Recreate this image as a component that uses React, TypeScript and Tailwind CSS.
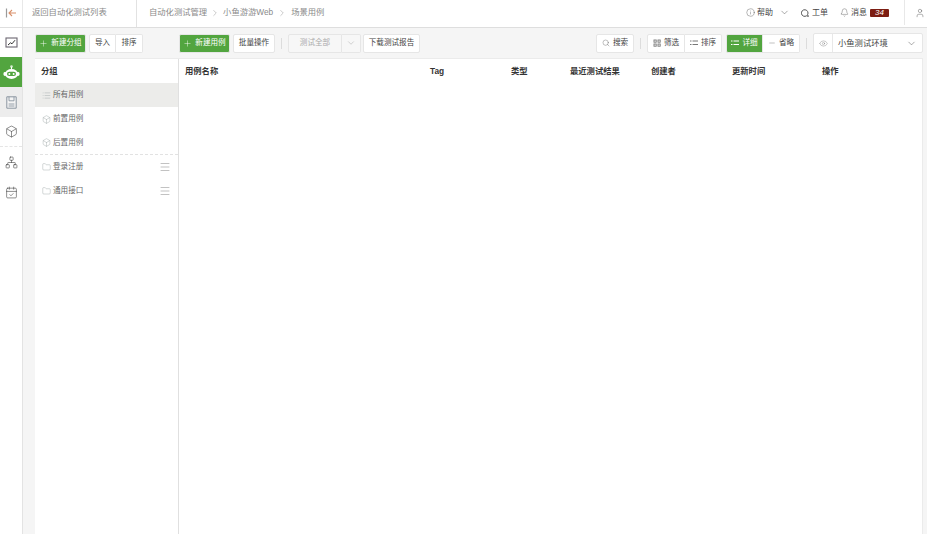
import React from "react";
import { Search, ChevronDown, ChevronRight, Plus, Eye, Info, User, Bell, Menu, List, Folder, Box, Network, CalendarCheck, Minus } from "lucide-react";

const Btn = ({ children, className = "" }: { children: React.ReactNode; className?: string }) => (
  <div className={`flex h-[19px] items-center justify-center border-[#e6e6e6] bg-white text-[7.6px] text-[#444] ${className}`}>{children}</div>
);

const Sep = () => <div className="h-[11px] w-px bg-[#dcdcdc]" />;

const Row = ({ icon, label, active, menu, dashed }: { icon: React.ReactNode; label: string; active?: boolean; menu?: boolean; dashed?: boolean }) => (
  <div className={`flex h-6 items-center pl-[7px] pr-[7px] text-[7.6px] text-[#666] ${active ? "bg-[#ececea]" : ""} ${dashed ? "border-b border-dashed border-[#e2e2e2]" : ""}`}>
    <span className="mr-[2px] flex w-[9px] justify-center text-[#8f9a9a]">{icon}</span>
    <span className="flex-1">{label}</span>
    {menu && <Menu size={12} strokeWidth={0.9} className="text-[#777]" />}
  </div>
);

const Rail = ({ children, active, muted, dashed, h = "h-[30px]" }: { children: React.ReactNode; active?: boolean; muted?: boolean; dashed?: boolean; h?: string }) => (
  <div className={`flex ${h} items-center justify-center ${active ? "bg-[#52a53f] text-white" : muted ? "bg-[#ededed] text-[#666]" : "text-[#444]"} ${dashed ? "border-b border-dashed border-[#e5e5e5]" : ""}`}>{children}</div>
);

const BackIcon = () => (
  <svg width="13" height="12" viewBox="0 0 13 12" fill="none">
    <path d="M2.5 1.5v9" stroke="#9a9a9a" strokeWidth="1.2" />
    <path d="M12 6H5M8 3 5 6l3 3" stroke="#d9906a" strokeWidth="1.1" />
  </svg>
);

const ChartIcon = () => (
  <svg width="13" height="11" viewBox="0 0 13 11" fill="none">
    <rect x="1" y="1" width="11" height="9" fill="#fff" stroke="#6b6570" strokeWidth="1.1" />
    <path d="M3 8l2.5-2.2 1.5 1L10 3.2" stroke="#333" strokeWidth="1" />
  </svg>
);

const RobotIcon = () => (
  <svg width="17" height="15" viewBox="0 0 17 15">
    <circle cx="8.5" cy="1.6" r="1.3" fill="#d8eed2" />
    <path d="M8.5 2v2" stroke="#fff" strokeWidth="1" />
    <rect x="0.5" y="7" width="3" height="4" rx="1.4" fill="#fff" />
    <rect x="13.5" y="7" width="3" height="4" rx="1.4" fill="#fff" />
    <ellipse cx="8.5" cy="9" rx="6.4" ry="5" fill="#fff" />
    <rect x="4" y="6.8" width="9" height="4.2" rx="2.1" fill="#52a53f" />
    <circle cx="6.4" cy="8.9" r="1" fill="#fff" />
    <circle cx="10.6" cy="8.9" r="1" fill="#fff" />
  </svg>
);

const DocIcon = () => (
  <svg width="11" height="13" viewBox="0 0 11 13" fill="none">
    <path d="M.8.8h9.4v11.4H.8z" fill="#f4f4f4" stroke="#8a95a0" strokeWidth="1" />
    <path d="M3 .8v4h5V.8M2.6 8h5.8M2.6 10h5.8" stroke="#8a95a0" strokeWidth=".9" />
  </svg>
);

const FilterDots = () => (
  <svg width="8" height="8" viewBox="0 0 8 8" fill="none" stroke="#777" strokeWidth=".9">
    <rect x="1" y="1" width="2.2" height="2.2" />
    <rect x="5" y="1" width="2.2" height="2.2" />
    <rect x="1" y="5" width="2.2" height="2.2" />
    <rect x="5" y="5" width="2.2" height="2.2" />
  </svg>
);

const Lines = ({ color }: { color: string }) => (
  <svg width="8" height="6" viewBox="0 0 8 6" fill="none" stroke={color} strokeWidth="1">
    <path d="M0 1h1.500M0 4.500h1.500M2.500 1H8M2.500 4.500H8" />
  </svg>
);

export default function App() {
  return (
    <div className="flex h-[534px] w-[927px] flex-col overflow-hidden bg-[#f5f5f5] text-[8.3px] text-[#444]" style={{ fontFamily: '"Liberation Sans", "Noto Sans CJK SC", sans-serif' }}>
      <header className="flex h-7 shrink-0 items-center border-b border-[#dedede] bg-white text-[#8a8a8a]">
        <div className="flex h-full w-[23px] items-center justify-center border-r border-[#e8e8e8] pb-[2px] pr-[2px]">
          <BackIcon />
        </div>
        <div className="flex h-full w-[114px] items-center border-r border-[#e2e2e2] pb-[2px] pl-[9px]">返回自动化测试列表</div>
        <div className="flex items-center pb-[2px] pl-3">
          <span>自动化测试管理</span>
          <ChevronRight size={10} strokeWidth={1.1} className="ml-[3px] mr-[3px]" />
          <span>小鱼游游Web</span>
          <ChevronRight size={10} strokeWidth={1.1} className="ml-[4px] mr-[4px]" />
          <span>场景用例</span>
        </div>
        <div className="ml-auto flex h-full items-center pb-[2px] text-[8px] text-[#444]">
          <Info size={9} strokeWidth={1} className="mr-[2px]" />
          <span>帮助</span>
          <ChevronDown size={11} strokeWidth={1} className="ml-[6px] mr-[11px]" />
          <svg width="8" height="8" viewBox="0 0 8 8" fill="none" stroke="#444" strokeWidth=".9" className="mr-[3px]"><path d="M5.500 6.800A3.300 3.300 0 1 1 6.600 5.600L7.400 7.400z" /></svg>
          <span>工单</span>
          <Bell size={9} strokeWidth={1} className="ml-[12px] mr-[2px]" />
          <span>消息</span>
          <span className="ml-[3px] flex h-[8px] w-[19px] items-center justify-center rounded-[1px] bg-[#7c1d12] text-[8px] italic text-white">34</span>
          <div className="ml-[15px] flex h-full w-[23px] items-center justify-end border-l border-[#e8e8e8] pr-[2px]">
            <User size={10} strokeWidth={1} />
          </div>
        </div>
      </header>
      <div className="flex min-h-0 flex-1">
        <nav className="w-[23px] shrink-0 border-r border-[#e3e3e3] bg-white">
          <Rail h="h-[29px]"><ChartIcon /></Rail>
          <Rail active><RobotIcon /></Rail>
          <Rail muted><DocIcon /></Rail>
          <Rail dashed><Box size={13} strokeWidth={1.1} /></Rail>
          <Rail><Network size={13} strokeWidth={1.1} /></Rail>
          <Rail><CalendarCheck size={13} strokeWidth={1.1} /></Rail>
        </nav>
        <main className="flex min-w-0 flex-1 flex-col pl-3 pr-1">
          <div className="flex h-[30px] shrink-0 items-center">
            <Btn className="w-[51px] rounded-[2px] border border-[#52a53f] !bg-[#52a53f] !text-white"><Plus size={9} strokeWidth={1.2} className="mr-[3px]" />新建分组</Btn>
            <Btn className="ml-[3px] w-[27px] rounded-l-[2px] border">导入</Btn>
            <Btn className="w-[27px] rounded-r-[2px] border border-l-0">排序</Btn>
            <Btn className="ml-[36px] w-[51px] rounded-[2px] border border-[#52a53f] !bg-[#52a53f] !text-white"><Plus size={9} strokeWidth={1.2} className="mr-[3px]" />新建用例</Btn>
            <Btn className="ml-[3px] w-[42px] rounded-[2px] border">批量操作</Btn>
            <div className="mx-[6px]"><Sep /></div>
            <Btn className="w-[54px] rounded-l-[2px] border !bg-[#f7f7f7] !text-[#aaa]">测试全部</Btn>
            <Btn className="w-[19px] rounded-r-[2px] border border-l-0 !bg-[#f7f7f7] !text-[#999]"><ChevronDown size={10} strokeWidth={1} /></Btn>
            <Btn className="ml-[2px] w-[57px] rounded-[2px] border">下载测试报告</Btn>
            <Btn className="ml-auto w-[38px] rounded-[2px] border"><Search size={8} strokeWidth={1} className="mr-[3px]" />搜索</Btn>
            <div className="mx-[6px]"><Sep /></div>
            <Btn className="w-[38px] rounded-l-[2px] border"><span className="mr-[3px]"><FilterDots /></span>筛选</Btn>
            <Btn className="w-[37px] rounded-r-[2px] border border-l-0"><span className="mr-[3px]"><Lines color="#777" /></span>排序</Btn>
            <div className="w-[4px]" />
            <Btn className="w-[37px] rounded-l-[2px] border border-[#52a53f] !bg-[#52a53f] !text-white"><span className="mr-[3px]"><Lines color="#fff" /></span>详细</Btn>
            <Btn className="w-[37px] rounded-r-[2px] border border-l-0"><Minus size={8} strokeWidth={1} className="mr-[3px]" />省略</Btn>
            <div className="mx-[6px]"><Sep /></div>
            <div className="flex h-5 w-[110px] items-center rounded-[2px] border border-[#e6e6e6] bg-white text-[8.3px] text-[#444]">
              <span className="flex h-full w-[19px] items-center justify-center border-r border-[#e8e8e8] text-[#777]"><Eye size={9} strokeWidth={1} /></span>
              <span className="ml-[5px] flex-1">小鱼测试环境</span>
              <ChevronDown size={11} strokeWidth={1} className="mr-[5px]" />
            </div>
          </div>
          <div className="flex min-h-0 flex-1 border-r border-t border-[#ebebeb] bg-white">
            <aside className="w-[144px] shrink-0 border-r border-[#e0e0e0]">
              <div className="flex h-6 items-center pl-[6px] font-bold text-[#333]">分组</div>
              <Row active icon={<List size={9} strokeWidth={1} />} label="所有用例" />
              <Row icon={<Box size={9} strokeWidth={1} />} label="前置用例" />
              <Row dashed icon={<Box size={9} strokeWidth={1} />} label="后置用例" />
              <Row menu icon={<Folder size={10} strokeWidth={1} />} label="登录注册" />
              <Row menu icon={<Folder size={10} strokeWidth={1} />} label="通用接口" />
            </aside>
            <section className="min-w-0 flex-1">
              <div className="grid h-6 grid-cols-[245px_81px_59px_81px_81px_90px_1fr] items-center pl-[6px] font-bold text-[#333]">
                <span>用例名称</span><span>Tag</span><span>类型</span><span>最近测试结果</span><span>创建者</span><span>更新时间</span><span>操作</span>
              </div>
            </section>
          </div>
        </main>
      </div>
    </div>
  );
}
